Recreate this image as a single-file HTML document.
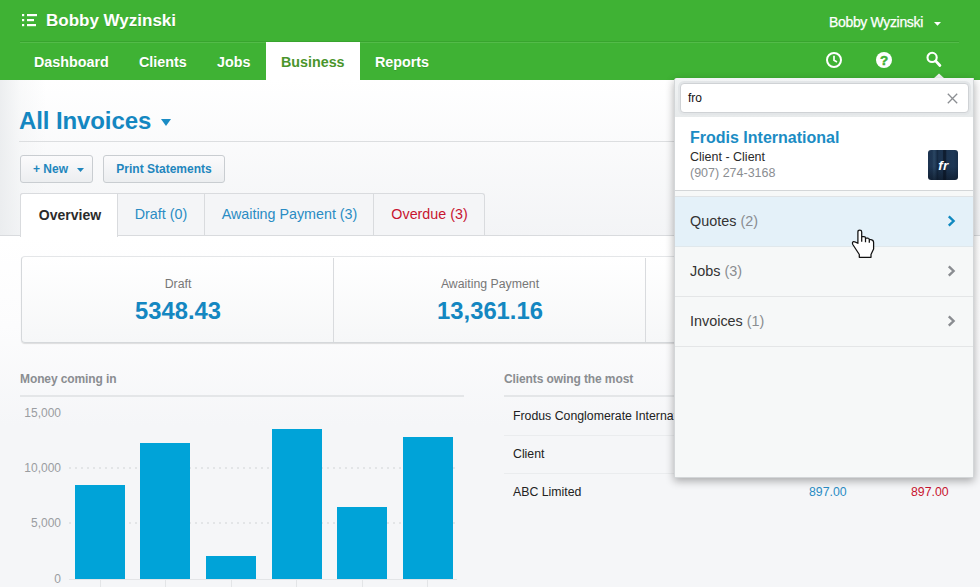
<!DOCTYPE html>
<html><head><meta charset="utf-8">
<style>
*{box-sizing:border-box;margin:0;padding:0}
html,body{width:980px;height:587px;overflow:hidden}
body{font-family:"Liberation Sans",Arial,sans-serif;background:#f5f6f8;position:relative;color:#333}
.abs{position:absolute}
#hdr{left:0;top:0;width:980px;height:80px;background:#3fb234}
#hline{left:20px;top:41px;width:939px;height:2px;background:linear-gradient(#38a42e 50%,#53bb49 50%)}
#brand{text-shadow:0 1px 0 rgba(0,0,0,.12);left:46px;top:11px;font-size:17px;font-weight:bold;color:#fff}
#user{left:829px;top:14px;font-size:14px;letter-spacing:-0.34px;color:#fff;-webkit-text-stroke:0.25px #fff}
.nav{text-shadow:0 1px 0 rgba(0,0,0,.12);top:54px;font-size:14.3px;font-weight:bold;color:#fff}
#navact{left:266px;top:42px;width:94px;height:38px;background:#fff}
#pagebg{left:0;top:80px;width:980px;height:156px;background:linear-gradient(#fff,#f3f4f6)}
#title{left:19px;top:107px;font-size:24px;font-weight:bold;color:#1487c1;letter-spacing:-0.1px}
#tline{left:19px;top:141px;width:660px;height:1px;background:#dcdee0}
.btn{top:155px;height:28px;border:1px solid #c9cdd1;border-radius:3px;background:linear-gradient(#fbfbfc,#eceef0);font-size:12px;font-weight:bold;color:#1f86bd;line-height:26px;text-align:center}
#tabs{left:20px;top:193px;width:465px;height:43px;border:1px solid #d9dbde;border-bottom:none;border-radius:3px 3px 0 0;background:#f4f5f7}
#tabline{left:0;top:235px;width:980px;height:1px;background:#d9dbde}
.tab{top:193px;height:43px;font-size:14.3px;line-height:43.5px;text-align:center;color:#2a8cc4;border-left:1px solid #d9dbde}
#tab1{left:20px;width:98px;background:#fff;color:#222;border:1px solid #d9dbde;border-bottom:none;height:44px;font-weight:bold;font-size:14px;color:#2b2b2b;padding-left:2px;border-radius:3px 0 0 0}
#below{left:0;top:236px;width:980px;height:351px;background:linear-gradient(#fff 0,#fcfcfd 90px,#f5f6f8 190px)}
#stats{left:21px;top:256px;width:700px;height:87px;border:1px solid #d5d8db;border-top-color:#e4e6e8;border-radius:4px;background:linear-gradient(#fff,#f6f7f8);box-shadow:0 1px 1px rgba(0,0,0,.12)}
.slabel{font-size:12.3px;color:#777;text-align:center;width:312px;top:277px}
.sval{font-size:23.8px;font-weight:bold;color:#1487c1;text-align:center;width:312px;top:297px}
.sec{font-size:12px;letter-spacing:-0.1px;font-weight:bold;color:#8a8d91;top:372px}
.secline{top:395px;height:2px;background:#e4e6e8}
.ylab{font-size:12px;color:#9a9da1;width:42px;text-align:right;left:19px}
.bar{background:#00a3d8;width:50px}
.grid{left:69px;width:388px;height:2px;background:repeating-linear-gradient(90deg,#e3e5e7 0,#e3e5e7 2px,transparent 2px,transparent 6px)}
.row{left:504px;width:460px;height:38px;border-bottom:1px solid #eaecee;font-size:12.3px;color:#222;line-height:36px;padding-left:9px}
#pop{left:674px;top:78px;width:300px;height:400px;background:#f6f8f8;border:1px solid #d3d6d8;border-top:none;border-radius:3px 0 0 0;box-shadow:0 3px 9px rgba(0,0,0,.32)}
#inp{left:5px;top:5px;width:289px;height:30px;border:1px solid #cfd2d5;border-radius:4px;background:#fff;font-size:12px;color:#111;line-height:29px;padding-left:7px;box-shadow:0 0 0 2px #e3e6e8}
#res{left:0;top:39px;width:298px;height:74px;background:#fff;border-bottom:1px solid #d3d6d8}
#ava{left:253px;top:72px;width:30px;height:30px;border-radius:3px;background:linear-gradient(rgba(10,20,35,0) 55%,rgba(8,16,28,.55) 100%),linear-gradient(90deg,#1c3350 0,#1e3653 14%,#2b4763 20%,#1f3754 27%,#142840 31%,#1b324e 36%,#1c3450 48%,#0f1d30 52%,#0f1d30 58%,#1d3552 63%,#1e3856 85%,#192f4a 100%);color:#fff;font-size:13.500px;font-weight:bold;font-style:italic;text-align:center;line-height:31px;letter-spacing:0.500px;padding-left:1px}
.item{left:0;width:298px;height:50px;border-bottom:1px solid #e4e6e7;font-size:14.400px;color:#333;line-height:48px;padding-left:15px}
.item span{color:#8a8d91}
</style></head><body>
<div id="hdr" class="abs"></div>
<div id="hline" class="abs"></div>
<svg class="abs" style="left:21px;top:13px" width="17" height="14" viewBox="0 0 17 14"><g fill="#fff"><rect x="1" y="1" width="2.200" height="2.200"/><rect x="6" y="1" width="10" height="2.200"/><rect x="1" y="6" width="2.200" height="2.200"/><rect x="6" y="6" width="7" height="2.200"/><rect x="1" y="11" width="2.200" height="2.200"/><rect x="6" y="11" width="9" height="2.200"/></g></svg>
<div id="brand" class="abs">Bobby Wyzinski</div>
<div id="user" class="abs">Bobby Wyzinski</div>
<svg class="abs" style="left:934px;top:22px" width="7" height="4"><path d="M0 0h7L3.500 3.800z" fill="#fff"/></svg>
<div id="navact" class="abs"></div>
<div class="abs nav" style="left:34px">Dashboard</div>
<div class="abs nav" style="left:139px">Clients</div>
<div class="abs nav" style="left:217px">Jobs</div>
<div class="abs nav" style="left:281px;color:#4a952b;text-shadow:none">Business</div>
<div class="abs nav" style="left:375px">Reports</div>
<svg class="abs" style="left:825px;top:51px" width="18" height="18" viewBox="0 0 18 18"><circle cx="9" cy="9" r="7" fill="none" stroke="#fff" stroke-width="2"/><path d="M9 4.800v4.500l3 1.600" fill="none" stroke="#fff" stroke-width="1.700"/></svg>
<svg class="abs" style="left:875px;top:51px" width="18" height="18" viewBox="0 0 18 18"><circle cx="9" cy="9" r="8" fill="#fff"/><text x="9" y="13.800" font-family="Liberation Sans, sans-serif" font-weight="bold" font-size="13.500" text-anchor="middle" fill="#3fb234" stroke="#3fb234" stroke-width="0.500">?</text></svg>
<svg class="abs" style="left:924px;top:50px" width="18" height="18" viewBox="0 0 18 18"><circle cx="8.100" cy="7.400" r="4.600" fill="none" stroke="#fff" stroke-width="2.100"/><path d="M11.600 10.900l4.300 4.600" stroke="#fff" stroke-width="2.800" stroke-linecap="round"/></svg>

<div id="pagebg" class="abs"></div>
<div class="abs" style="left:0;top:80px;width:46px;height:156px;background:linear-gradient(90deg,rgba(234,236,238,.9),rgba(240,242,243,.4) 45%,rgba(244,245,246,0))"></div>
<div id="title" class="abs">All Invoices</div>
<svg class="abs" style="left:161px;top:119px" width="10" height="7"><path d="M0 0h10L5 7z" fill="#1b8cc4"/></svg>
<div id="tline" class="abs"></div>
<div class="abs btn" style="left:20px;width:73px;padding-right:12px">+ New</div>
<svg class="abs" style="left:77px;top:168px" width="7" height="4"><path d="M0 0h7L3.5 4z" fill="#1f86bd"/></svg>
<div class="abs btn" style="left:103px;width:122px">Print Statements</div>

<div id="below" class="abs"></div>
<div id="tabs" class="abs"></div>
<div id="tabline" class="abs"></div>
<div id="tab1" class="abs tab">Overview</div>
<div class="abs tab" style="left:118px;width:86px;border-left:none">Draft (0)</div>
<div class="abs tab" style="left:204px;width:170px">Awaiting Payment (3)</div>
<div class="abs tab" style="left:373px;width:112px;color:#c8142f">Overdue (3)</div>

<div id="stats" class="abs"></div>
<div class="abs" style="left:333px;top:258px;width:1px;height:84px;background:#d9dbde"></div>
<div class="abs" style="left:645px;top:258px;width:1px;height:84px;background:#d9dbde"></div>
<div class="abs slabel" style="left:22px">Draft</div>
<div class="abs sval" style="left:22px">5348.43</div>
<div class="abs slabel" style="left:334px">Awaiting Payment</div>
<div class="abs sval" style="left:334px">13,361.16</div>

<div class="abs sec" style="left:20px">Money coming in</div>
<div class="abs secline" style="left:20px;width:444px"></div>
<div class="abs ylab" style="top:406px">15,000</div>
<div class="abs ylab" style="top:461px">10,000</div>
<div class="abs ylab" style="top:516px">5,000</div>
<div class="abs ylab" style="top:572px">0</div>
<div class="abs grid" style="top:467px"></div>
<div class="abs grid" style="top:522px"></div>
<div class="abs bar" style="left:75px;top:485px;height:94px"></div>
<div class="abs bar" style="left:140px;top:443px;height:136px"></div>
<div class="abs bar" style="left:206px;top:556px;height:23px"></div>
<div class="abs bar" style="left:272px;top:429px;height:150px"></div>
<div class="abs bar" style="left:337px;top:507px;height:72px"></div>
<div class="abs bar" style="left:403px;top:437px;height:142px"></div>

<div class="abs" style="left:69px;top:579px;width:388px;height:1px;background:#e3e5e7"></div>
<div class="abs" style="left:100px;top:579px;width:1px;height:8px;background:#e3e5e7"></div>
<div class="abs" style="left:165px;top:579px;width:1px;height:8px;background:#e3e5e7"></div>
<div class="abs" style="left:231px;top:579px;width:1px;height:8px;background:#e3e5e7"></div>
<div class="abs" style="left:296px;top:579px;width:1px;height:8px;background:#e3e5e7"></div>
<div class="abs" style="left:362px;top:579px;width:1px;height:8px;background:#e3e5e7"></div>
<div class="abs" style="left:427px;top:579px;width:1px;height:8px;background:#e3e5e7"></div>
<div class="abs sec" style="left:504px">Clients owing the most</div>
<div class="abs secline" style="left:504px;width:460px"></div>
<div class="abs row" style="top:398px">Frodus Conglomerate International</div>
<div class="abs row" style="top:436px">Client</div>
<div class="abs row" style="top:474px;border-bottom:none">ABC Limited</div>
<div class="abs" style="left:809px;top:485px;font-size:12.3px;color:#2a8cc4">897.00</div>
<div class="abs" style="left:911px;top:485px;font-size:12.3px;color:#c8142f">897.00</div>

<svg class="abs" style="left:933px;top:73px" width="12" height="6"><path d="M0 6L6 0.500l6 5.500z" fill="#f3f5f5"/></svg>
<div id="pop" class="abs">
 <div class="abs" style="left:0;top:0;width:298px;height:39px;background:linear-gradient(#f2f4f5,#e7eaeb);border-radius:3px 0 0 0"></div>
 <div id="inp" class="abs">fro</div>
 <svg class="abs" style="left:272px;top:15px" width="11" height="11"><path d="M0.800 0.800l9.400 9.400M10.200 0.800l-9.400 9.400" stroke="#8b8e92" stroke-width="1.300"/></svg>
 <div id="res" class="abs"></div>
 <div class="abs" style="left:15px;top:51px;font-size:16px;font-weight:bold;color:#1b8cc4">Frodis International</div>
 <div class="abs" style="left:15px;top:72px;font-size:12.500px;color:#2a2a2a">Client - Client</div>
 <div class="abs" style="left:15px;top:88px;font-size:12.500px;color:#8a8d91">(907) 274-3168</div>
 <div id="ava" class="abs">fr</div>
 <div class="abs item" style="top:118px;height:51px;line-height:49px;background:#e4f1f9;border-top:1px solid #dfe3e6;border-bottom:1px solid #e0e8ec">Quotes <span>(2)</span></div>
 <div class="abs item" style="top:169px">Jobs <span>(3)</span></div>
 <div class="abs item" style="top:219px">Invoices <span>(1)</span></div>
 <svg class="abs" style="left:272px;top:137px" width="9" height="12"><path d="M1.800 1.300L6.600 6l-4.800 4.700" fill="none" stroke="#1089c0" stroke-width="2.400"/></svg>
 <svg class="abs" style="left:272px;top:187px" width="9" height="12"><path d="M1.800 1.300L6.600 6l-4.800 4.700" fill="none" stroke="#8a8d91" stroke-width="2.400"/></svg>
 <svg class="abs" style="left:272px;top:237px" width="9" height="12"><path d="M1.800 1.300L6.600 6l-4.800 4.700" fill="none" stroke="#8a8d91" stroke-width="2.400"/></svg>
</div>
<svg class="abs" style="left:845px;top:222px" width="40" height="40" viewBox="0 0 40 40"><path d="M12.900 21.300L12.900 10Q12.900 8.200 14.800 8.200Q16.700 8.200 16.700 10L16.700 14.500L19 14.500Q20.500 14.500 20.500 16L22.800 16Q24.300 16.200 24.300 17.500L26 17.600Q28.600 18 28.600 20.500L28.600 27L26 32.500L26 35.300L14.300 35.300L14.300 32.500L7.800 22.500Q6.800 20.200 8.600 19.600Q9.800 19.400 12.900 21.300Z" fill="#fff" stroke="#111" stroke-width="1.250" stroke-linejoin="round"/><path d="M16.700 14.500V19.800M20.500 16V20.300M24.300 17.500V20.800" stroke="#111" stroke-width="1.250"/></svg>
</body></html>
